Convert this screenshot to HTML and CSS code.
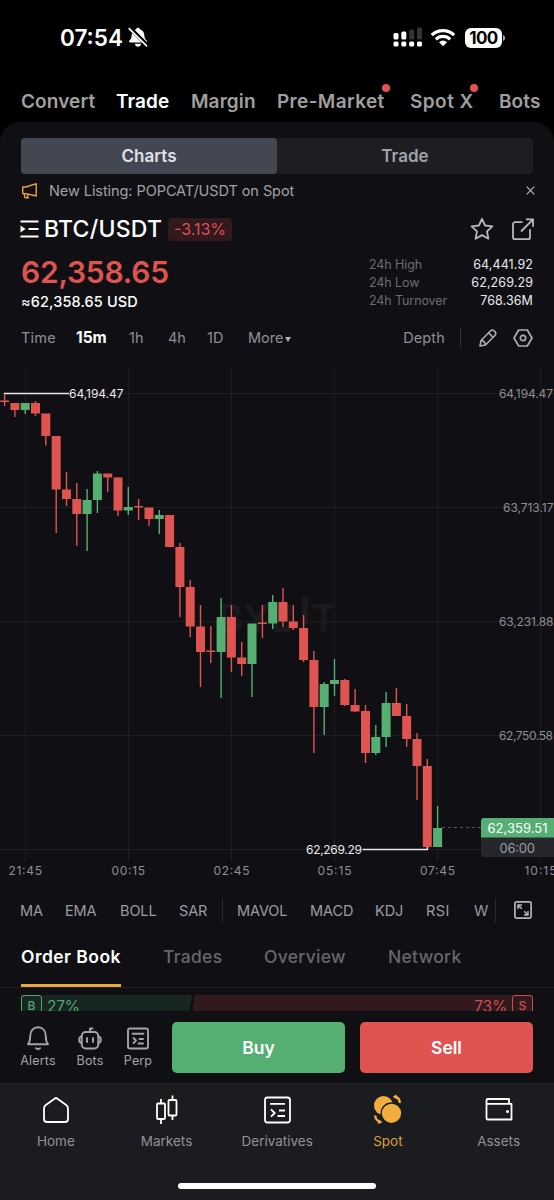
FILE: index.html
```html
<!DOCTYPE html>
<html lang="en">
<head>
<meta charset="utf-8">
<title>BTC/USDT Spot</title>
<link rel="stylesheet" href="styles.css">
</head>
<body>
<div class="app">
  <header class="status">
    <div class="clock">07:54</div>
    <svg class="mute" width="20" height="21" viewBox="0 0 20 21"><path d="M10 .8c-1 0-1.700.6-1.900 1.400C5.200 3.100 3.900 5.300 3.700 8c-.2 3-.8 4.300-2.300 5.600-.7.700-.3 1.900.7 1.900h15.800c1 0 1.400-1.200.7-1.900-1.500-1.300-2.100-2.600-2.300-5.600-.2-2.700-1.500-4.900-4.400-5.800C11.700 1.400 11 .8 10 .8zM6.800 16.800c.3 1.700 1.600 2.900 3.200 2.900s2.900-1.200 3.200-2.900z" fill="#fff"/><path d="M2.200 1.300 19 18" stroke="#000" stroke-width="4"/><path d="M1.200 1.600 18.600 18.900" stroke="#fff" stroke-width="1.600" stroke-linecap="round"/></svg>
    <svg class="signal" width="30" height="22" viewBox="0 0 30 22"><g fill="#fff"><rect x=".5" y="6" width="5" height="6.500" rx="1.500"/><rect x="8.300" y="4.500" width="5" height="8" rx="1.500"/><rect x=".5" y="14.500" width="5" height="5" rx="1.500"/><rect x="8.300" y="14.500" width="5" height="5" rx="1.500"/><rect x="16.200" y="14.500" width="5" height="5" rx="1.500"/><rect x="24" y="14.500" width="5" height="5" rx="1.500"/></g><g fill="#333"><rect x="16.200" y="2.500" width="5" height="10" rx="1.500"/><rect x="24" y=".5" width="5" height="12" rx="1.500"/></g></svg>
    <svg class="wifi" width="26" height="19" viewBox="0 0 26 19" fill="none" stroke="#fff"><path d="M1.800 7.200a16 16 0 0 1 22.400 0" stroke-width="3.200"/><path d="M5.800 11.400a10.300 10.300 0 0 1 14.400 0" stroke-width="3.200"/><path d="M13 18.200 9 14.200a5.700 5.700 0 0 1 8 0z" fill="#fff" stroke="none"/></svg>
    <div class="battery">100</div>
    <svg width="4" height="8" viewBox="0 0 4 8"><path d="M1 1c2.800.8 2.800 5.200 0 6z" fill="#aaa"/></svg>
  </header>
  <nav class="topnav">
    <span>Convert</span><span class="on">Trade</span><span>Margin</span><span class="new pre">Pre-Market</span><span class="new spotx">Spot X</span><span>Bots</span>
  </nav>
  <main class="panel">
    <div class="segment"><div class="seg-on">Charts</div><div>Trade</div></div>
    <div class="notice">
      <svg width="18" height="18" viewBox="0 0 18 18" fill="none" stroke="#e9a33b" stroke-width="1.400" stroke-linejoin="round"><path d="M5 5 15.200 1.700v12.300L5 11.600H1.700V5zM1.700 5v6.300M3 11.800l1.200 4h3l-1-3.800"/></svg>
      <span class="notice-text">New Listing: POPCAT/USDT on Spot</span>
      <svg width="9" height="9" viewBox="0 0 9 9"><path d="m.7.7 7.600 7.600m0-7.600L.7 8.300" stroke="#b5b5b9" stroke-width="1.200"/></svg>
    </div>
    <section class="pair">
      <svg width="19" height="18" viewBox="0 0 19 18"><path d="M.5 1.500h18M8.500 9h10M.5 16.500h18" stroke="#fff" stroke-width="2.200"/><path d="M.5 5.500 5.500 9l-5 3.500z" fill="#fff"/></svg>
      <h1>BTC/USDT</h1>
      <span class="change">-3.13%</span>
      <svg class="star" width="24" height="24" viewBox="0 0 24 24" fill="none" stroke="#b8b9bd" stroke-width="1.800" stroke-linejoin="round"><path d="m12 1.800 3.100 6.700 7.300.9-5.400 5 1.400 7.300-6.400-3.600-6.400 3.600L7 14.400l-5.400-5 7.300-.9z"/></svg>
      <svg width="22" height="23" viewBox="0 0 22 23" fill="none" stroke="#b8b9bd" stroke-width="1.800"><path d="M10.500 4.200H3a2 2 0 0 0-2 2v13a2 2 0 0 0 2 2h13a2 2 0 0 0 2-2v-8M9 13.500 20.500 1.800M14 1.300h7v7.500"/></svg>
    </section>
    <section class="quote">
      <div><div class="price">62,358.65</div><div class="fiat">≈62,358.65 USD</div></div>
      <dl><dt class="hi">24h High</dt><dd>64,441.92</dd><dt class="lo">24h Low</dt><dd>62,269.29</dd><dt class="to">24h Turnover</dt><dd class="m">768.36M</dd></dl>
    </section>
    <nav class="frames">
      <span>Time</span><b>15m</b><span>1h</span><span>4h</span><span>1D</span><span>More<i class="caret"></i></span><span class="depth">Depth</span><i class="rule"></i>
      <svg width="20" height="20" viewBox="0 0 20 20" fill="none" stroke="#adaeb2" stroke-width="1.600" stroke-linejoin="round"><path d="M2 18l1-5.500L12.600 2.700a2.300 2.300 0 0 1 3.300 0l1.200 1.200a2.300 2.300 0 0 1 0 3.300L7.500 17zM10.500 4.800l4.600 4.600M3 12.500c2-.3 4.300 1.800 4.500 4.500"/></svg>
      <svg width="20" height="20" viewBox="0 0 20 20" fill="none" stroke="#adaeb2" stroke-width="1.700" stroke-linejoin="round"><path d="M5.700 2h8.600L19 10l-4.700 8H5.700L1 10z"/><circle cx="10" cy="10" r="2.700"/></svg>
    </nav>
    <svg class="chart" width="554" height="525" viewBox="0 360 554 525">
      <path class="grid" d="M0 393.500H554M0 507.500H554M0 621.500H554M0 735.500H554M0 849.500H554M25.500 368V862M128.500 368V862M231.500 368V862M334.500 368V862M437.500 368V862M540.500 368V862"/>
      <g class="watermark"><text x="218" y="632" textLength="78">BYB</text><path d="M302 597h6v27h-6z"/><text x="311" y="632" textLength="23">T</text></g>
      <g class="red">
        <path class="wick" d="M4.600 393V406M14.900 403V417M35.500 401V416M45.800 414V445.500M56.200 436V533M66.500 472V506M76.800 483V546M107.700 474V492M118 477V516M138.600 499V520M149 508V526M179.900 543V617M190.200 580V637M200.500 605V687M210.800 626V663M231.400 605V672M241.700 642V676M262.400 605V638M283 588V627M293.300 605V630M303.600 615V662M313.900 651V753M344.800 679V706M355.100 689V712M365.500 705V763M396.400 688V716M406.700 704V747M417 733V800M427.300 759V849"/>
        <path class="body" d="M4.600 400.500V402M14.900 403V410M35.500 403V413.500M45.800 413.500V436M56.200 436V489.500M66.500 489.500V499M76.800 499V514M107.700 473.500V477.500M118 477.500V510.500M138.600 506V507.500M149 507.500V519M169.600 515V547M179.900 547V587M190.200 587V626.500M200.500 626.500V652M210.800 650.500V652M231.400 617V657.500M241.700 657.500V664M262.400 622.500V624M283 602V621.500M293.300 621.500V628M303.600 628V660M313.900 660V707M344.800 680V705M355.100 705V711.500M365.500 711V753M396.400 703V716M406.700 716V739M417 739V766M427.300 766V847"/>
      </g>
      <g class="green">
        <path class="wick" d="M25.200 403V414M87.100 489V551M97.400 471V513M128.300 487V515M159.300 510V534M221.100 598V698M252 624V697M272.700 595V629M324.200 682V735M334.500 659V696M375.800 725V755M386.100 692V747M437.600 806V847"/>
        <path class="body" d="M25.200 403V410M87.100 500V514M97.400 473.500V500M128.300 507V510.500M159.300 515V519M221.100 617V652M252 623.500V664M272.700 602V623.500M324.200 684V707M334.500 680V684M375.800 737V753M386.100 703V737M437.600 828V847"/>
      </g>
      <path d="M4.600 394V393.500H69M362.500 849.500H427.500V847" fill="none" stroke="#e8e8ea" stroke-width="1.300"/>
      <path d="M442 827.500H481" stroke="#55575d" stroke-dasharray="3 3"/>
      <g class="extreme"><text x="69" y="398" textLength="54.500">64,194.47</text><text x="306" y="854" textLength="56">62,269.29</text></g>
      <g class="axis"><text x="499" y="398" textLength="54">64,194.47</text><text x="503" y="512" textLength="50.500">63,713.17</text><text x="499" y="626" textLength="54.500">63,231.88</text><text x="499" y="740" textLength="54">62,750.58</text>
      <text x="8.500" y="875" textLength="33.500">21:45</text><text x="111.500" y="875" textLength="33.500">00:15</text><text x="213.500" y="875" textLength="36">02:45</text><text x="317.500" y="875" textLength="34">05:15</text><text x="420" y="875" textLength="35">07:45</text><text x="524.500" y="875" textLength="32">10:15</text></g>
      <path d="M481 837H554V857H484a3 3 0 0 1-3-3z" fill="#26272c"/><path d="M484 818H554V837.500H481V821a3 3 0 0 1 3-3z" fill="#55af72"/>
      <text class="last" x="487.500" y="833" textLength="60">62,359.51</text><text class="timer" x="499.500" y="852.500" textLength="35.500">06:00</text>
    </svg>
    <nav class="indicators"><span>MA</span><span>EMA</span><span>BOLL</span><span>SAR</span><i></i><span>MAVOL</span><span>MACD</span><span>KDJ</span><span>RSI</span><span class="cut">W</span><i></i>
      <svg width="18" height="18" viewBox="0 0 18 18" fill="none" stroke="#b4b5b9" stroke-width="1.700"><rect x=".9" y=".9" width="16.200" height="16.200" rx="1.500"/><path d="M4 8V4h4M4.200 4.200l3.600 3.600M10 14h4v-4M13.800 13.800l-3.600-3.600" stroke-width="1.500"/></svg>
    </nav>
    <nav class="tabs"><span class="on">Order Book</span><span>Trades</span><span>Overview</span><span>Network</span></nav>
    <div class="ratio"><div class="bids"><span class="tag">B</span><span class="pct">27%</span></div><div class="asks"><span class="pct">73%</span><span class="tag">S</span></div></div>
  </main>
  <section class="actions">
    <div class="tool"><svg width="24" height="26" viewBox="0 0 24 26"><path d="M2 19.300c1.600-2 2.200-3.500 2.200-8C4.200 5.500 7.500 2.300 12 2.300s7.800 3.200 7.800 9c0 4.500.6 6 2.200 8zM10 23.200c1.300 1 2.700 1 4 0"/></svg><span>Alerts</span></div>
    <div class="tool"><svg width="24" height="26" viewBox="0 0 24 26"><rect x="3.700" y="7" width="16.600" height="16.500" rx="4"/><path d="M12 7V3.500h2.500M3.700 11.500c-3.300.5-3.300 6 0 6.500M20.300 11.500c3.300.5 3.300 6 0 6.500M9 13v4M15 13v4"/></svg><span>Bots</span></div>
    <div class="tool"><svg width="24" height="26" viewBox="0 0 24 26"><rect x="2" y="3.500" width="20" height="20" rx="2"/><path d="M6.500 8.800h11M7.500 13l2.500 2.500L7.500 18M13.500 14H17M12.500 18.500H17"/></svg><span>Perp</span></div>
    <button class="buy">Buy</button><button class="sell">Sell</button>
  </section>
  <footer class="dock">
    <div class="item"><svg width="32" height="32" viewBox="0 0 32 32"><path d="M16 3.800 26.200 11c1.300.9 1.800 2 1.800 3.500V25a3 3 0 0 1-3 3H7a3 3 0 0 1-3-3V14.500c0-1.500.5-2.600 1.800-3.500z"/></svg><span>Home</span></div>
    <div class="item"><svg width="32" height="32" viewBox="0 0 32 32"><rect x="6" y="9.500" width="8" height="15.500" rx="1"/><rect x="17.500" y="6" width="8" height="15.500" rx="1"/><path d="M10 5v4.500M10 25V30M21.500 1.500V6M21.500 21.500V26"/></svg><span>Markets</span></div>
    <div class="item"><svg width="32" height="32" viewBox="0 0 32 32"><rect x="4" y="3.500" width="25" height="25" rx="2.500"/><path d="M9 9.800h15M10 15.300l3.700 3.700-3.700 3.700M18 16.500h6M16.500 22H24"/></svg><span>Derivatives</span></div>
    <div class="item active"><svg width="32" height="32" viewBox="0 0 32 32"><circle cx="11.500" cy="11.500" r="9.500" fill="#f1ae3f" stroke="none"/><circle cx="19.500" cy="19.300" r="10.300" fill="#f1ae3f" stroke="#1b1c20" stroke-width="1.300"/><path d="M23 2.500c3.200 1 4.800 3.300 4.800 6.600M3.200 21.500c.2 3.200 2 5.500 5 6.300" stroke="#f1ae3f" stroke-width="2.400"/><path d="m20.800 2.800 3.700-2.500v5zM5.500 30l5-1.500-3.500-3z" fill="#f1ae3f" stroke="none"/></svg><span>Spot</span></div>
    <div class="item"><svg width="32" height="32" viewBox="0 0 32 32"><path d="M3.500 10.500V6.300c0-.8.500-1.300 1.300-1.300H26v5.500M3.500 9.800h25v15.700h-24c-.6 0-1-.4-1-1z"/><circle cx="24.500" cy="17.500" r="1.500" fill="#fff" stroke="none"/></svg><span>Assets</span></div>
    <div class="homebar"></div>
  </footer>
</div>
</body>
</html>
```
FILE: styles.css
```css
* { box-sizing: border-box; margin: 0; padding: 0; }
body { background: #000; font-family: Inter, "Noto Sans", sans-serif; color: #fff; }
.app { width: 554px; height: 1200px; overflow: hidden; display: flex; flex-direction: column; white-space: nowrap; }
svg { flex: none; display: block; }
.status { height: 80px; display: flex; align-items: center; padding: 0 0 5px 60px; flex: none; }
.clock { width: 68px; font-size: 22.500px; font-weight: 600; letter-spacing: 0; }
.signal { margin-left: 245px; }
.wifi { margin-left: 7px; }
.battery { margin-left: 9px; width: 37px; height: 20px; border-radius: 6px; background: #fff; color: #000; font-size: 17px; line-height: 20px; font-weight: 700; text-align: center; letter-spacing: -.6px; }
.topnav { height: 42px; flex: none; display: grid; grid-template-columns: 95px 75px 86px 133px 89px 60px; padding: 1px 0 0 21px; line-height: 42px; font-size: 19px; font-weight: 600; letter-spacing: .1px; color: #a09f9f; }
.topnav .on { color: #fff; }
.new { position: relative; }
.new::after { content: ""; position: absolute; top: 3px; width: 8px; height: 8px; border-radius: 50%; background: #e05350; }
.pre { letter-spacing: .35px; }
.spotx { letter-spacing: .45px; }
.pre::after { left: 105px; }
.spotx::after { left: 60px; }
.panel { height: 889px; flex: none; background: #101014; border-radius: 20px 20px 0 0; padding-top: 16px; overflow: hidden; }
.segment { display: grid; grid-template-columns: 1fr 1fr; height: 36px; margin: 0 21px; background: #1d1d22; border-radius: 4px; line-height: 36px; text-align: center; font-size: 17px; font-weight: 600; color: #9fa1a7; }
.segment .seg-on { background: #424752; color: #dfe2e8; border-radius: 4px; }
.notice { height: 34px; display: flex; align-items: center; padding: 0 19px 1px 21px; font-size: 14.500px; letter-spacing: -.07px; color: #a1a1a6; }
.notice-text { flex: 1; margin-left: 10px; }
.pair { height: 42px; display: flex; align-items: center; padding: 0 20px; }
.pair h1 { width: 124px; margin-left: 5px; font-size: 23px; font-weight: 500; letter-spacing: .25px; }
.change { width: 64px; height: 23px; border-radius: 4px; background: #31191d; color: #dd5153; font-size: 16px; line-height: 23px; text-align: center; }
.star { margin-left: auto; margin-right: 18px; }
.quote { height: 64px; display: flex; justify-content: space-between; padding: 4px 21px 0; }
.price { height: 37px; line-height: 37px; font-size: 30px; font-weight: 600; color: #df5350; letter-spacing: -.25px; }
.fiat { line-height: 22px; font-size: 14.500px; font-weight: 500; letter-spacing: .12px; }
dl { display: grid; grid-template-columns: 94px 70px; line-height: 18px; font-size: 12.500px; padding-top: 2px; align-content: start; }
dt { color: #6b6c72; letter-spacing: -.1px; }
dd { text-align: right; color: #e9e9eb; letter-spacing: .1px; }
.frames { height: 46px; display: flex; align-items: center; padding: 1px 21px 0; font-size: 14.500px; color: #8e8f95; }
.frames > :nth-child(1) { width: 55px; letter-spacing: .2px; }
.frames > :nth-child(2) { width: 53px; color: #fff; font-weight: 700; font-size: 15.500px; }
.frames > :nth-child(3), .frames > :nth-child(4) { width: 39px; }
.frames > :nth-child(5) { width: 41px; }
.caret { display: inline-block; margin-left: 2px; border: 3.500px solid transparent; border-top: 5px solid #b0b1b5; border-bottom: 0; vertical-align: 1px; }
.depth { margin-left: auto; letter-spacing: .15px; }
.rule { width: 1px; height: 19px; margin: 0 17px 0 15px; background: #303136; }
.rule + svg { margin-right: 15px; }
.grid { stroke: #fff; stroke-opacity: .055; fill: none; }
.watermark { font-weight: 700; fill: #1a1a1e; }
.wick { stroke-width: 1.400; }
.body { stroke-width: 9; }
.red { stroke: #df5350; fill: none; }
.green { stroke: #55af72; fill: none; }
.chart text { font-family: Inter, sans-serif; }
.watermark text { font-size: 38px; }
.extreme { font-size: 12px; fill: #ececee; }
.axis { font-size: 12px; fill: #8e8f95; }
.last { font-size: 13px; fill: #fff; }
.timer { font-size: 13px; fill: #9b9ca2; }
.indicators { height: 50px; display: flex; align-items: center; padding-left: 20px; font-size: 14.500px; letter-spacing: -.1px; color: #9b9ca2; }
.indicators span:nth-child(1) { width: 45px; }
.indicators span:nth-child(2) { width: 55px; }
.indicators span:nth-child(3) { width: 59px; }
.indicators span:nth-child(4) { width: 43px; }
.indicators i { width: 1px; height: 25px; background: #292a2f; }
.indicators span:nth-child(6) { width: 87px; padding-left: 14px; }
.indicators span:nth-child(7) { width: 65px; }
.indicators span:nth-child(8) { width: 51px; }
.indicators span:nth-child(9) { width: 48px; letter-spacing: .4px; }
.indicators .cut { width: 21px; }
.indicators svg { margin-left: 18px; }
.tabs { height: 53px; display: grid; grid-template-columns: 100px 59px 82px 74px; gap: 42px; padding-left: 21px; line-height: 43px; font-size: 17.500px; font-weight: 500; letter-spacing: .3px; color: #66676d; border-bottom: 1px solid #1e1f24; }
.tabs .on { color: #fff; font-weight: 600; letter-spacing: .45px; border-bottom: 3px solid #e9a93d; }
.ratio { height: 24px; margin: 7px 21px 0; display: flex; font-size: 15.500px; line-height: 24px; }
.bids, .asks { display: flex; }
.bids { width: 171px; background: #182622; color: #4fa86d; clip-path: polygon(0 0, 100% 0, 98% 100%, 0 100%); }
.asks { flex: 1; justify-content: flex-end; background: #31191d; color: #d04d4e; clip-path: polygon(.7% 0, 100% 0, 100% 100%, 0 100%); }
.tag { width: 21px; height: 22px; border: 1.500px solid; border-radius: 3px; font-size: 12px; font-weight: 500; line-height: 19px; text-align: center; }
.pct { margin: 0 5px; letter-spacing: -.2px; }
.actions { height: 72px; flex: none; background: #101014; display: flex; align-items: flex-start; padding-top: 11px; }
.tool { width: 50px; display: flex; flex-direction: column; align-items: center; padding-top: 3px; font-size: 12.500px; letter-spacing: .15px; color: #a3a4a9; line-height: 20px; }
.tool:first-child { margin-left: 13px; }
.tool:nth-child(2) { margin-left: 2px; }
.tool:nth-child(3) { margin-left: -2px; }
.tool svg { fill: none; stroke: #a3a4a9; stroke-width: 1.900; stroke-linejoin: round; stroke-linecap: round; }
button { border: 0; height: 51px; border-radius: 5px; color: #fff; font: 600 17.500px Inter, sans-serif; }
.buy { width: 173px; margin-left: 9px; background: #55af72; }
.sell { width: 173px; margin-left: 15px; background: #df5350; }
.dock { height: 117px; flex: none; background: #1b1c20; display: grid; grid-template-columns: repeat(5, 110.700px); grid-template-rows: 90px 1fr; border-top: 1px solid #202125; }
.item { display: flex; flex-direction: column; align-items: center; padding: 10px 0 0 1px; font-size: 13.500px; line-height: 30px; color: #919298; }
.item svg { fill: none; stroke: #fff; stroke-width: 1.800; stroke-linejoin: round; }
.active { color: #d99d39; }
.homebar { grid-column: 1 / -1; width: 198px; height: 6px; border-radius: 3px; background: #fff; justify-self: center; margin-top: 9px; }
```
